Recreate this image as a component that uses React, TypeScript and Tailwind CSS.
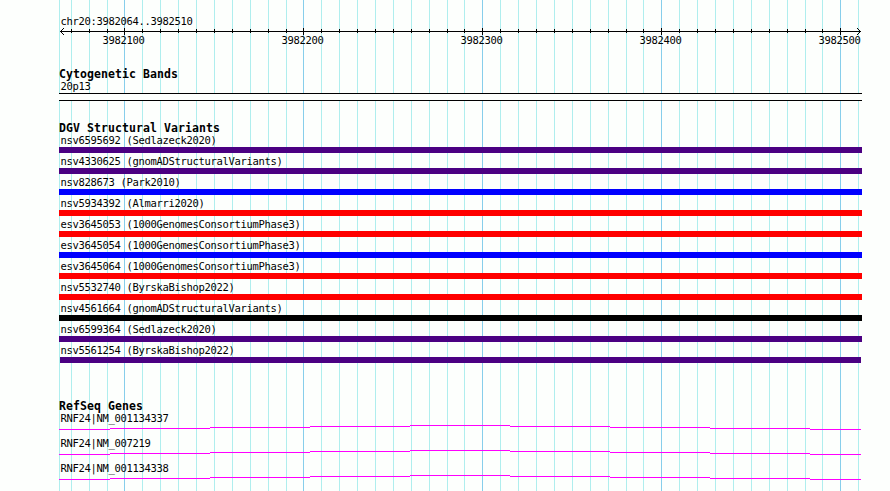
const minorLines = [
  59, 71, 89, 107, 142, 160, 178, 196, 214, 232, 250, 268, 286, 321, 339, 357, 375, 393, 411, 429, 447, 464, 500,
  518, 536, 554, 572, 590, 608, 626, 643, 679, 697, 715, 733, 751, 769, 787, 805, 822, 858,
]
const majorLines = [124, 303, 482, 661, 840]

const tickLabels = ['3982100', '3982200', '3982300', '3982400', '3982500']

const colors = {
  purple: 'bg-[#4b0082]',
  blue: 'bg-[#0000ff]',
  red: 'bg-[#ff0000]',
  black: 'bg-black',
}

interface Variant {
  name: string
  color: keyof typeof colors
  inset?: boolean
}

const variants: Variant[] = [
  { name: 'nsv6595692 (Sedlazeck2020)', color: 'purple' },
  { name: 'nsv4330625 (gnomADStructuralVariants)', color: 'purple' },
  { name: 'nsv828673 (Park2010)', color: 'blue' },
  { name: 'nsv5934392 (Almarri2020)', color: 'red' },
  { name: 'esv3645053 (1000GenomesConsortiumPhase3)', color: 'red' },
  { name: 'esv3645054 (1000GenomesConsortiumPhase3)', color: 'blue' },
  { name: 'esv3645064 (1000GenomesConsortiumPhase3)', color: 'red' },
  { name: 'nsv5532740 (ByrskaBishop2022)', color: 'red' },
  { name: 'nsv4561664 (gnomADStructuralVariants)', color: 'black' },
  { name: 'nsv6599364 (Sedlazeck2020)', color: 'purple' },
  { name: 'nsv5561254 (ByrskaBishop2022)', color: 'purple', inset: true },
]

const genes = ['RNF24|NM_001134337', 'RNF24|NM_007219', 'RNF24|NM_001134338']

function GridLines() {
  return (
    <svg className="absolute inset-0" width="890" height="491" shapeRendering="crispEdges">
      {minorLines.map((x) => (
        <rect key={x} x={x} y="0" width="1" height="491" fill="#afeeee" />
      ))}
      {majorLines.map((x) => (
        <rect key={x} x={x} y="0" width="1" height="491" fill="#87ceeb" />
      ))}
    </svg>
  )
}

function Ruler() {
  return (
    <svg className="block" width="803" height="11" viewBox="59 26 803 11" shapeRendering="crispEdges">
      <rect x="60" y="31" width="801" height="1" />
      {minorLines.slice(1, -1).map((x) => (
        <rect key={x} x={x} y="29" width="1" height="4" />
      ))}
      {majorLines.map((x) => (
        <rect key={x} x={x} y="28" width="1" height="7" />
      ))}
      {/* Arrow heads */}
      {[1, 2, 3].map((d) => (
        <g key={d}>
          <rect x={60 + d} y={31 - d} width="1" height="1" />
          <rect x={60 + d} y={31 + d} width="1" height="1" />
          <rect x={860 - d} y={31 - d} width="1" height="1" />
          <rect x={860 - d} y={31 + d} width="1" height="1" />
        </g>
      ))}
    </svg>
  )
}

// Intron line that rises towards the middle in one pixel steps
function GeneLine() {
  return (
    <svg className="block" width="803" height="5" viewBox="59 0 803 5" shapeRendering="crispEdges" fill="#ff00ff">
      <rect x="59" y="4" width="51" height="1" />
      <rect x="110" y="3" width="100" height="1" />
      <rect x="210" y="2" width="100" height="1" />
      <rect x="310" y="1" width="100" height="1" />
      <rect x="410" y="0" width="100" height="1" />
      <rect x="510" y="1" width="100" height="1" />
      <rect x="610" y="2" width="100" height="1" />
      <rect x="710" y="3" width="100" height="1" />
      <rect x="810" y="4" width="51" height="1" />
    </svg>
  )
}

function TrackTitle({ children }: { children: string }) {
  return <h2 className="h-[13px] text-[11.5px] leading-[13px] font-bold tracking-[0.077px]">{children}</h2>
}

export default function App() {
  return (
    <main className="relative h-[491px] w-[890px] overflow-hidden bg-[#fdfffd] font-['DejaVu_Sans_Mono',monospace] text-[10.5px] leading-[13px] tracking-[-0.321px] whitespace-pre text-black">
      <GridLines />
      <div className="relative ml-[59px] w-[803px] pt-[15px]">
        <section className="h-[53px]">
          <div className="h-[11px] pl-[1.4px]">chr20:3982064..3982510</div>
          <Ruler />
          <div className="-mt-[3px] flex pl-[43.6px]">
            {tickLabels.map((label) => (
              <span key={label} className="mr-[137px] w-[42px] shrink-0">
                {label}
              </span>
            ))}
          </div>
        </section>

        <section className="h-[54px]">
          <TrackTitle>Cytogenetic Bands</TrackTitle>
          <div className="-mt-px pl-[1.4px]">20p13</div>
          <div className="h-2 border-y border-black bg-[#fdfffd]" />
        </section>

        <section className="h-[278px]">
          <TrackTitle>DGV Structural Variants</TrackTitle>
          <div className="-mt-px">
            {variants.map((variant) => (
              <div key={variant.name} className="h-[21px]">
                <div className="h-[13px] pl-[1.4px]">{variant.name}</div>
                <div className={`h-1.5 ${colors[variant.color]} ${variant.inset ? 'mx-px' : ''}`} />
              </div>
            ))}
          </div>
        </section>

        <section>
          <TrackTitle>RefSeq Genes</TrackTitle>
          <div className="-mt-px">
            {genes.map((gene) => (
              <div key={gene} className="h-[25px]">
                <div className="h-[13px] pl-[1.4px]">{gene}</div>
                <GeneLine />
              </div>
            ))}
          </div>
        </section>
      </div>
    </main>
  )
}
